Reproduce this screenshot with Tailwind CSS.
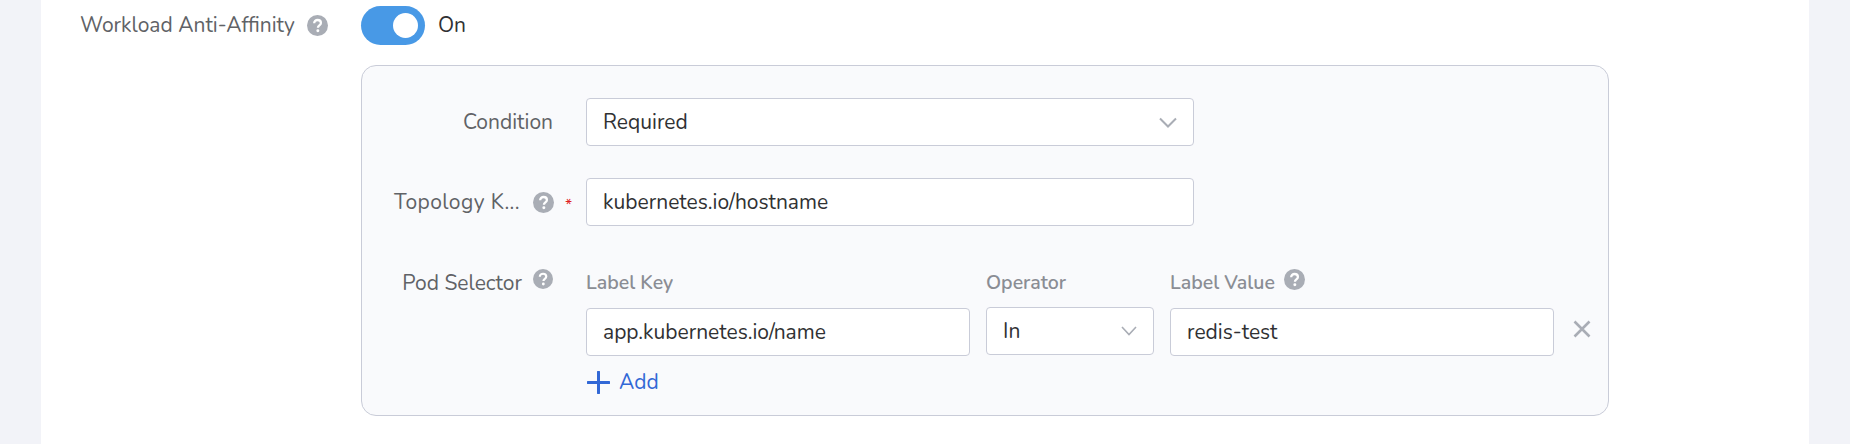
<!DOCTYPE html>
<html lang="en">
<head>
    <meta charset="UTF-8">
    <title>Workload Anti-Affinity</title>
    <script src="https://cdn.jsdelivr.net/npm/@tailwindcss/browser@4"></script>
</head>
<body class="bg-[#f2f3f8] font-['Nunito','Lato','Noto_Sans',sans-serif] overflow-hidden">
    <div class="ml-[41px] w-[1768px] h-[444px] bg-white pl-[39px] pt-[6px]">

        <!-- Toggle row -->
        <div class="flex items-center h-[39px]">
            <div class="w-[281px] flex items-center text-[21px] text-[#606266]">
                <span>Workload Anti-Affinity</span>
                <svg class="w-[21px] h-[21px] ml-[12px]" viewBox="0 0 24 24"><circle cx="12" cy="12" r="12" fill="#a9adb5"/><path d="M8.2 9.3c0-2.2 1.7-3.6 3.9-3.6s3.8 1.3 3.8 3.3c0 2.9-3.4 2.8-3.4 5.5" fill="none" stroke="#fff" stroke-width="2.6"/><circle cx="12.4" cy="18" r="1.7" fill="#fff"/></svg>
            </div>
            <div class="relative w-[64px] h-[39px] rounded-full bg-[#4899e6]">
                <div class="absolute left-[32px] top-[7px] w-[25px] h-[25px] rounded-full bg-white"></div>
            </div>
            <span class="ml-[13px] text-[21px] text-[#303133]">On</span>
        </div>

        <!-- Panel -->
        <div class="ml-[281px] mt-[20px] w-[1248px] h-[351px] rounded-[15px] border border-[#c9ccd8] bg-[#f9fafc] pt-[32px] text-[21px]">

            <div class="flex h-[48px]">
                <div class="w-[191px] shrink-0 flex items-center justify-end pt-[2px] text-[#606266]">Condition</div>
                <div class="ml-[33px] w-[608px] h-[48px] flex items-center justify-between px-[16px] bg-white border border-[#c9ccd8] rounded-[4px] text-[#303133]">
                    <span class="pt-[2px]">Required</span>
                    <svg class="w-[18px] h-[11px] text-[#a9adb5]" viewBox="0 0 18 11"><path d="M1 1.5l8 8 8-8" fill="none" stroke="currentColor" stroke-width="2"/></svg>
                </div>
            </div>

            <div class="flex h-[48px] mt-[32px]">
                <div class="w-[211px] shrink-0 flex items-center justify-end text-[#606266]">
                    <span class="pt-[2px] tracking-[0.4px]">Topology K...</span>
                    <svg class="w-[21px] h-[21px] ml-[13px]" viewBox="0 0 24 24"><circle cx="12" cy="12" r="12" fill="#a9adb5"/><path d="M8.2 9.3c0-2.2 1.7-3.6 3.9-3.6s3.8 1.3 3.8 3.3c0 2.9-3.4 2.8-3.4 5.5" fill="none" stroke="#fff" stroke-width="2.6"/><circle cx="12.4" cy="18" r="1.7" fill="#fff"/></svg>
                    <span class="ml-[11px] w-[8px] text-[#e02020] text-[16px] leading-none pt-[5px]">*</span>
                </div>
                <div class="ml-[13px] w-[608px] h-[48px] flex items-center px-[16px] pt-[2px] bg-white border border-[#c9ccd8] rounded-[4px] text-[#303133]">kubernetes.io/hostname</div>
            </div>

            <div class="flex mt-[38px]">
                <div class="w-[191px] shrink-0 flex items-start justify-end text-[#606266] h-[34px]">
                    <span class="leading-[38px]">Pod Selector</span>
                    <svg class="w-[20px] h-[20px] ml-[11px] mt-[5px]" viewBox="0 0 24 24"><circle cx="12" cy="12" r="12" fill="#a9adb5"/><path d="M8.2 9.3c0-2.2 1.7-3.6 3.9-3.6s3.8 1.3 3.8 3.3c0 2.9-3.4 2.8-3.4 5.5" fill="none" stroke="#fff" stroke-width="2.6"/><circle cx="12.4" cy="18" r="1.7" fill="#fff"/></svg>
                </div>
                <div class="ml-[33px]">
                    <div class="flex h-[36px] items-center text-[19.5px] font-semibold text-[#8a8d94]">
                        <span class="w-[400px] pt-[2px]">Label Key</span>
                        <span class="w-[184px] pt-[2px]">Operator</span>
                        <span class="pt-[2px]">Label Value</span>
                        <svg class="w-[21px] h-[21px] ml-[9px] -mt-[5px]" viewBox="0 0 24 24"><circle cx="12" cy="12" r="12" fill="#a9adb5"/><path d="M8.2 9.3c0-2.2 1.7-3.6 3.9-3.6s3.8 1.3 3.8 3.3c0 2.9-3.4 2.8-3.4 5.5" fill="none" stroke="#fff" stroke-width="2.6"/><circle cx="12.4" cy="18" r="1.7" fill="#fff"/></svg>
                    </div>
                    <div class="flex items-start mt-[8px] h-[48px]">
                        <div class="w-[384px] h-[48px] flex items-center px-[16px] pt-[2px] bg-white border border-[#c9ccd8] rounded-[4px] text-[#303133]">app.kubernetes.io/name</div>
                        <div class="ml-[16px] -mt-px w-[168px] h-[48px] flex items-center justify-between px-[16px] bg-white border border-[#c9ccd8] rounded-[4px] text-[#303133]">
                            <span class="pt-[2px]">In</span>
                            <svg class="w-[16px] h-[10px] text-[#a9adb5]" viewBox="0 0 16 10"><path d="M1 1l7 7.5L15 1" fill="none" stroke="currentColor" stroke-width="1.6"/></svg>
                        </div>
                        <div class="ml-[16px] w-[384px] h-[48px] flex items-center px-[16px] pt-[2px] bg-white border border-[#c9ccd8] rounded-[4px] text-[#303133]">redis-test</div>
                        <svg class="w-[18px] h-[18px] ml-[19px] mt-[12px] text-[#a9adb5]" viewBox="0 0 18 18"><path d="M1.5 1.5l15 15M16.5 1.5l-15 15" fill="none" stroke="currentColor" stroke-width="2.6"/></svg>
                    </div>
                    <div class="flex items-center h-[24px] mt-[14px] text-[#3268d6]">
                        <svg class="w-[23px] h-[23px] ml-px" viewBox="0 0 23 23"><path d="M11.5 1v21M1 11.5h21" fill="none" stroke="currentColor" stroke-width="3" stroke-linecap="round"/></svg>
                        <span class="ml-[9px] pt-[2px]">Add</span>
                    </div>
                </div>
            </div>
        </div>
    </div>
</body>
</html>
